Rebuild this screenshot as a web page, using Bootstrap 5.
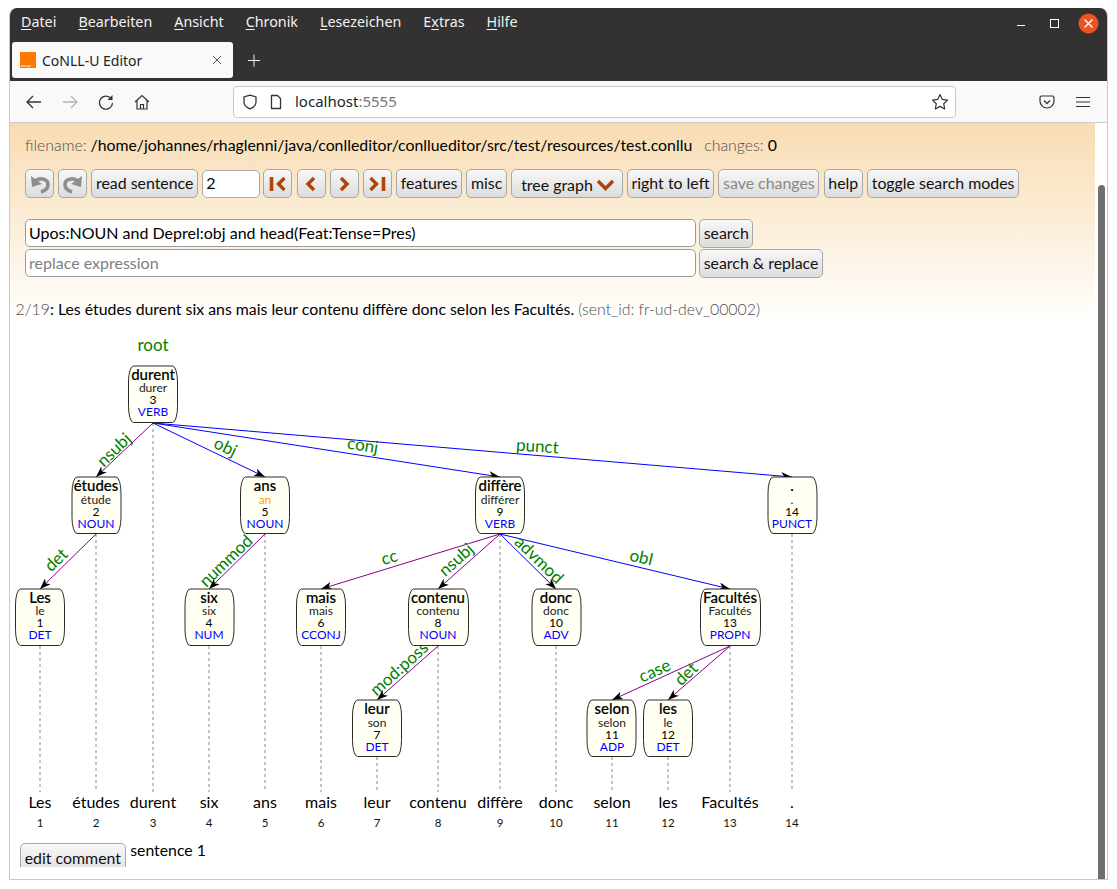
<!DOCTYPE html>
<html lang="de">
<head>
<meta charset="utf-8">
<title>CoNLL-U Editor</title>
<link href="https://cdn.jsdelivr.net/npm/bootstrap@5.3.0/dist/css/bootstrap.min.css" rel="stylesheet">
<style>
html,body{height:889px;overflow:hidden;background:#fff;margin:0}
.frame{margin:8px 9px 9px 9px;height:872px;border:1px solid #c9c9c9;border-top:0;border-radius:8px 8px 0 0;overflow:hidden;font-family:"Noto Sans",sans-serif}
.menu-bar{height:34px;background:#333132;color:#f2f2f2;font-size:14.300px;padding-left:11px;gap:22px}
.menu-txt{margin-bottom:6px}
.menu-bar u{text-underline-offset:2px}
.win-btns{margin-left:auto;height:34px}
.tab-bar{height:39px;background:#333132;padding-left:2px}
.tab-item{width:221px;height:36px;background:#f9f9fa;border-radius:3px;font-size:14px;color:#222;padding:0 11px 0 8px;gap:6px}
.fav{flex:none}
.tab-x{margin-left:auto;flex:none}
.plus{margin-left:14px}
.nav-bar{height:42px;background:#f9f9fa;border-bottom:1px solid #ccc;padding-left:15px}
.nav-ico{width:36px;flex:none}
.home-ico{width:18px;flex:none}
.url-bar{width:723px;height:32px;margin-left:82px;background:#fff;border:1px solid #c8c8c8;border-radius:4px;font-size:15px;padding:0 6px 0 8px;flex:none}
.url-bar .port{color:#777}
.g-doc{margin-left:10px}
.g-host{margin-left:11px}
.right-ico{margin-left:auto;padding-right:16px;gap:20px}
.main-row{height:757px}
.app-pane{width:1085px;position:relative;overflow:hidden;height:744px;font-family:Lato,sans-serif;font-size:15.840px;color:#000;background:linear-gradient(to bottom,#f8dcb2 0,#fff 200px,#fff 100%);flex:none}
.scroll-pane{width:12px;background:#fff;flex:none}
.scroll-thumb{width:7px;height:695px;margin-top:62px;margin-left:3px;background:#6f6f6f;border-radius:4px 4px 0 0}
.file-line{padding:12px 0 0 15px;height:42px;line-height:20px}
.lite{color:#4d4d4d;font-weight:300}
.tool-row{padding-left:15px;gap:4.150px;height:29px;margin-top:4px}
.tbtn{height:29px;padding:0 3.700px 2px;font-family:Lato,sans-serif;font-size:15.900px;line-height:25px;color:#111;background:linear-gradient(to bottom,#f8f8f8,#dcdcdc);border:1px solid #a8a8a8;border-radius:5px;white-space:nowrap;flex:none}
.tbtn.off{color:#888}
.ibtn{width:29px;padding:0;display:flex;align-items:center;justify-content:center}
.num-in{width:58px;height:28px;font-size:16px;padding:0 3px 2px;margin-right:-1px;border:1px solid #a8a8a8;border-radius:5px;background:#fff;font-family:Lato,sans-serif;flex:none}
.sel-btn{width:111.500px;padding:2px 2px 0 9px;display:flex;align-items:center;gap:3px}
.search-wrap{margin-top:21px;padding-left:15px}
.search-row{gap:3px;height:30px}
.txt-in{width:671px;height:28px;font-size:16px;padding:0 3px 2px;border:1px solid #9b9b9b;border-radius:5px;background:#fff;color:#000;font-family:Lato,sans-serif;flex:none}
.txt-in::placeholder{color:#808080}
.sent-line{margin-top:20px;padding-left:5.500px;line-height:20px}
.tree-svg{display:block;margin-top:11px}
.tree-svg text{font-family:Lato,sans-serif;text-anchor:middle}
.n-box{fill:#fffff3;stroke:#2a2a2a;stroke-width:1}
.t-form{font-size:15px;font-weight:500;fill:#000;stroke:#000;stroke-width:.15px}
.t-lem{font-size:12px;fill:#222}
.t-id{font-size:12px;fill:#000}
.t-pos{font-size:12px;fill:#00f}
.t-orange{font-size:12px;fill:orange}
.t-lab{font-size:17px;fill:green}
.t-word{font-size:16px;fill:#000}
.t-num{font-size:11.500px;fill:#111}
.e-p{stroke:#8b008b;stroke-width:1;fill:none;marker-end:url(#arr)}
.e-b{stroke:#00f;stroke-width:1;fill:none;marker-end:url(#arr)}
.e-d{stroke:#888;stroke-width:1;stroke-dasharray:3 3;fill:none}
.foot-row{position:absolute;left:10px;top:720px;gap:4.500px;line-height:20px}
.sent-note{margin-top:-3px}
.cmt-btn{height:30px;padding:0 3.700px;font-family:Lato,sans-serif;font-size:15.900px;background:linear-gradient(to bottom,#f8f8f8,#e0e0e0);border:1px solid #a8a8a8;border-radius:5px;color:#111;align-self:flex-start}
</style>
</head>
<body>
<div class="frame">
  <div class="menu-bar d-flex align-items-center">
    <span class="menu-txt"><u>D</u>atei</span><span class="menu-txt"><u>B</u>earbeiten</span><span class="menu-txt"><u>A</u>nsicht</span><span class="menu-txt"><u>C</u>hronik</span><span class="menu-txt"><u>L</u>esezeichen</span><span class="menu-txt">E<u>x</u>tras</span><span class="menu-txt"><u>H</u>ilfe</span>
    <svg class="win-btns" width="100" height="34" viewBox="0 0 100 34">
      <path d="M10 17.500h8" stroke="#fff" stroke-width="1" fill="none"/>
      <rect x="43.500" y="11.500" width="8" height="8" stroke="#fff" fill="none"/>
      <circle cx="81.500" cy="15.500" r="10" fill="#e95420"/>
      <path d="M77.500 11.500l8 8M85.500 11.500l-8 8" stroke="#fff" stroke-width="1.400"/>
    </svg>
  </div>
  <div class="tab-bar d-flex align-items-start">
    <div class="tab-item d-flex align-items-center">
      <svg class="fav" width="16" height="16" viewBox="0 0 16 16"><rect width="16" height="16" fill="#ff7900"/><text x="1" y="14.800" font-size="3.200" fill="#fff" font-family="Liberation Sans,sans-serif">orange</text></svg>
      <span>CoNLL-U Editor</span>
      <svg class="tab-x" width="10" height="10" viewBox="0 0 10 10"><path d="M1 1l8 8M9 1l-8 8" stroke="#555" stroke-width="1"/></svg>
    </div>
    <svg class="plus" width="14" height="36" viewBox="0 0 14 36"><path d="M1 18.500h12M7 12.500v12" stroke="#f2f2f2" stroke-width="1"/></svg>
  </div>
  <div class="nav-bar d-flex align-items-center">
    <span class="nav-ico d-flex"><svg width="18" height="16" viewBox="0 0 18 16"><path d="M2 8h14M8 2L2 8l6 6" stroke="#333" stroke-width="1.300" fill="none"/></svg></span>
    <span class="nav-ico d-flex"><svg width="18" height="16" viewBox="0 0 18 16"><path d="M2 8h14M10 2l6 6-6 6" stroke="#b5b5b5" stroke-width="1.300" fill="none"/></svg></span>
    <span class="nav-ico d-flex"><svg width="18" height="16" viewBox="0 0 18 16"><path d="M14 4.500A6.500 6.500 0 1 0 15.500 9" stroke="#333" stroke-width="1.300" fill="none"/><path d="M15.500 1v5h-5z" fill="#333"/></svg></span>
    <span class="home-ico d-flex"><svg width="18" height="16" viewBox="0 0 18 16"><path d="M2 8l7-6.500L16 8M4 6.500V15h10V6.500M7.500 15v-4.500h3V15" stroke="#333" stroke-width="1.200" fill="none"/></svg></span>
    <div class="url-bar d-flex align-items-center">
      <svg width="16" height="16" viewBox="0 0 16 16"><path d="M8 1.200L2 3v5c0 3.200 2.600 5.600 6 6.800 3.400-1.200 6-3.600 6-6.800V3z" stroke="#333" stroke-width="1.300" fill="none"/></svg>
      <svg class="g-doc" width="16" height="16" viewBox="0 0 16 16"><path d="M3.500 1.500h6l3 3v10h-9z" stroke="#333" stroke-width="1.300" fill="none" stroke-linejoin="round"/></svg>
      <span class="g-host">localhost<span class="port">:5555</span></span>
      <svg class="ms-auto" width="18" height="18" viewBox="0 0 18 18"><path d="M9 1.500l2.300 4.900 5.200.7-3.800 3.600 1 5.300L9 13.400l-4.700 2.600 1-5.300L1.500 7.100l5.200-.7z" stroke="#333" stroke-width="1.200" fill="none" stroke-linejoin="round"/></svg>
    </div>
    <div class="right-ico d-flex align-items-center">
      <svg width="16" height="16" viewBox="0 0 16 16"><path d="M2.500 2h11A1.500 1.500 0 0 1 15 3.500V7A7 7 0 0 1 1 7V3.500A1.500 1.500 0 0 1 2.500 2z" stroke="#333" stroke-width="1.200" fill="none"/><path d="M5 6.500l3 3 3-3" stroke="#333" stroke-width="1.300" fill="none"/></svg>
      <svg width="16" height="16" viewBox="0 0 16 16"><path d="M1 3.500h14M1 8h14M1 12.500h14" stroke="#333" stroke-width="1.200"/></svg>
    </div>
  </div>
  <div class="main-row d-flex">
    <div class="app-pane">
      <div class="file-line"><span class="lite">filename:</span> /home/johannes/rhaglenni/java/conlleditor/conllueditor/src/test/resources/test.conllu <span class="lite ms-2">changes:</span> 0</div>
      <div class="tool-row d-flex align-items-center">
        <button class="tbtn ibtn" type="button" aria-label="undo"><svg width="22" height="20" viewBox="0 0 22 20"><path d="M2 2l1 11 10-3z" fill="#8e8e8e"/><path d="M7 6.500C11 3.500 19 5 19 10.500 19 14.500 15.500 17 12 18" stroke="#8e8e8e" stroke-width="3.600" fill="none"/></svg></button>
        <button class="tbtn ibtn" type="button" aria-label="redo"><svg width="22" height="20" viewBox="0 0 22 20"><path d="M20 2l-1 11-10-3z" fill="#8e8e8e"/><path d="M15 6.500C11 3.500 3 5 3 10.500 3 14.500 6.500 17 10 18" stroke="#8e8e8e" stroke-width="3.600" fill="none"/></svg></button>
        <button class="tbtn" type="button">read sentence</button>
        <input class="num-in" value="2" aria-label="sentence">
        <button class="tbtn ibtn" type="button" aria-label="first"><svg width="20" height="16" viewBox="0 0 20 16"><path d="M3.500 1v14" stroke="#b0420a" stroke-width="3.600"/><path d="M16.500 2l-6 6 6 6" stroke="#b0420a" stroke-width="3.400" fill="none"/></svg></button>
        <button class="tbtn ibtn" type="button" aria-label="previous"><svg width="14" height="16" viewBox="0 0 14 16"><path d="M10 2L4 8l6 6" stroke="#b0420a" stroke-width="3.400" fill="none"/></svg></button>
        <button class="tbtn ibtn" type="button" aria-label="next"><svg width="14" height="16" viewBox="0 0 14 16"><path d="M4 2l6 6-6 6" stroke="#b0420a" stroke-width="3.400" fill="none"/></svg></button>
        <button class="tbtn ibtn" type="button" aria-label="last"><svg width="20" height="16" viewBox="0 0 20 16"><path d="M16.500 1v14" stroke="#b0420a" stroke-width="3.600"/><path d="M3.500 2l6 6-6 6" stroke="#b0420a" stroke-width="3.400" fill="none"/></svg></button>
        <button class="tbtn" type="button">features</button>
        <button class="tbtn" type="button">misc</button>
        <button class="tbtn sel-btn" type="button">tree graph<svg width="19" height="12" viewBox="0 0 19 12"><path d="M2 2l7.500 7.500L17 2" stroke="#b0420a" stroke-width="3.400" fill="none"/></svg></button>
        <button class="tbtn" type="button">right to left</button>
        <button class="tbtn off" type="button">save changes</button>
        <button class="tbtn" type="button">help</button>
        <button class="tbtn" type="button">toggle search modes</button>
      </div>
      <div class="search-wrap">
        <div class="search-row d-flex align-items-start"><input class="txt-in" value="Upos:NOUN and Deprel:obj and head(Feat:Tense=Pres)" aria-label="search"><button class="tbtn" type="button">search</button></div>
        <div class="search-row d-flex align-items-start"><input class="txt-in" placeholder="replace expression" aria-label="replace"><button class="tbtn" type="button">search &amp; replace</button></div>
      </div>
      <div class="sent-line"><span class="lite">2/19</span>: Les études durent six ans mais leur contenu diffère donc selon les Facultés. <span class="lite">(sent_id: fr-ud-dev_00002)</span></div>
      <svg class="tree-svg" width="850" height="505" viewBox="10 330 850 505" role="img" aria-label="tree graph">
        <defs><marker id="arr" markerUnits="userSpaceOnUse" markerWidth="12" markerHeight="8" refX="11" refY="4" orient="auto"><path d="M0 0L11 4L0 8L3 4z" fill="#000"/></marker></defs>
        <g>
          <path class="e-d" d="M40 646V792M96 534V792M153 423V792M209 646V792M265 534V792M321 646V792M377 757V792M438 646V792M500 534V792M556 646V792M612 757V792M668 757V792M730 646V792M792 534V792"/>
          <path class="e-p" d="M153 423L96 477"/><path class="e-b" d="M153 423L265 477"/><path class="e-b" d="M153 423L500 477"/><path class="e-b" d="M153 423L792 477"/>
          <path class="e-p" d="M96 534L40 589"/><path class="e-p" d="M265 534L209 589"/>
          <path class="e-p" d="M500 534L321 589"/><path class="e-p" d="M500 534L438 589"/><path class="e-b" d="M500 534L556 589"/><path class="e-b" d="M500 534L730 589"/>
          <path class="e-p" d="M438 646L377 700"/><path class="e-p" d="M730 646L612 700"/><path class="e-p" d="M730 646L668 700"/>
        </g>
        <g>
          <text class="t-lab" x="153" y="351">root</text>
          <text class="t-lab" transform="translate(118,454) rotate(-44)">nsubj</text>
          <text class="t-lab" transform="translate(223,452) rotate(26)">obj</text>
          <text class="t-lab" transform="translate(362,451) rotate(9)">conj</text>
          <text class="t-lab" transform="translate(537,452) rotate(4)">punct</text>
          <text class="t-lab" transform="translate(60,564) rotate(-44)">det</text>
          <text class="t-lab" transform="translate(230,565) rotate(-44)">nummod</text>
          <text class="t-lab" transform="translate(391,563) rotate(-17)">cc</text>
          <text class="t-lab" transform="translate(460,564) rotate(-42)">nsubj</text>
          <text class="t-lab" transform="translate(535,564) rotate(44)">advmod</text>
          <text class="t-lab" transform="translate(640,563) rotate(13)">obl</text>
          <text class="t-lab" transform="translate(403,673) rotate(-42)">mod:poss</text>
          <text class="t-lab" transform="translate(657,676) rotate(-24)">case</text>
          <text class="t-lab" transform="translate(690,678) rotate(-44)">det</text>
        </g>
        <g id="nodes">
          <g><rect class="n-box" x="128.500" y="366" width="49" height="56.500" rx="5" ry="16"/><text class="t-form" x="153" y="380">durent</text><text class="t-lem" x="153" y="392">durer</text><text class="t-id" x="153" y="404">3</text><text class="t-pos" x="153" y="416">VERB</text></g>
          <g><rect class="n-box" x="72" y="477" width="49" height="56.500" rx="5" ry="16"/><text class="t-form" x="96" y="491">études</text><text class="t-lem" x="96" y="504">étude</text><text class="t-id" x="96" y="516">2</text><text class="t-pos" x="96" y="528">NOUN</text></g>
          <g><rect class="n-box" x="240.500" y="477" width="49" height="56.500" rx="5" ry="16"/><text class="t-form" x="265" y="491">ans</text><text class="t-orange" x="265" y="504">an</text><text class="t-id" x="265" y="516">5</text><text class="t-pos" x="265" y="528">NOUN</text></g>
          <g><rect class="n-box" x="475.500" y="477" width="49" height="56.500" rx="5" ry="16"/><text class="t-form" x="500" y="491">diffère</text><text class="t-lem" x="500" y="504">différer</text><text class="t-id" x="500" y="516">9</text><text class="t-pos" x="500" y="528">VERB</text></g>
          <g><rect class="n-box" x="768" y="477" width="49" height="56.500" rx="5" ry="16"/><text class="t-form" x="792" y="491">.</text><text class="t-lem" x="792" y="504">.</text><text class="t-id" x="792" y="516">14</text><text class="t-pos" x="792" y="528">PUNCT</text></g>
          <g><rect class="n-box" x="15.500" y="589" width="49" height="56.500" rx="5" ry="16"/><text class="t-form" x="40" y="603">Les</text><text class="t-lem" x="40" y="615">le</text><text class="t-id" x="40" y="627">1</text><text class="t-pos" x="40" y="639">DET</text></g>
          <g><rect class="n-box" x="185" y="589" width="49" height="56.500" rx="5" ry="16"/><text class="t-form" x="209" y="603">six</text><text class="t-lem" x="209" y="615">six</text><text class="t-id" x="209" y="627">4</text><text class="t-pos" x="209" y="639">NUM</text></g>
          <g><rect class="n-box" x="296.500" y="589" width="49" height="56.500" rx="5" ry="16"/><text class="t-form" x="321" y="603">mais</text><text class="t-lem" x="321" y="615">mais</text><text class="t-id" x="321" y="627">6</text><text class="t-pos" x="321" y="639">CCONJ</text></g>
          <g><rect class="n-box" x="408.500" y="589" width="60" height="56.500" rx="5" ry="16"/><text class="t-form" x="438" y="603">contenu</text><text class="t-lem" x="438" y="615">contenu</text><text class="t-id" x="438" y="627">8</text><text class="t-pos" x="438" y="639">NOUN</text></g>
          <g><rect class="n-box" x="532" y="589" width="49" height="56.500" rx="5" ry="16"/><text class="t-form" x="556" y="603">donc</text><text class="t-lem" x="556" y="615">donc</text><text class="t-id" x="556" y="627">10</text><text class="t-pos" x="556" y="639">ADV</text></g>
          <g><rect class="n-box" x="700.500" y="589" width="60" height="56.500" rx="5" ry="16"/><text class="t-form" x="730" y="603">Facultés</text><text class="t-lem" x="730" y="615">Facultés</text><text class="t-id" x="730" y="627">13</text><text class="t-pos" x="730" y="639">PROPN</text></g>
          <g><rect class="n-box" x="352.500" y="700" width="49" height="56.500" rx="5" ry="16"/><text class="t-form" x="377" y="714">leur</text><text class="t-lem" x="377" y="727">son</text><text class="t-id" x="377" y="739">7</text><text class="t-pos" x="377" y="751">DET</text></g>
          <g><rect class="n-box" x="587" y="700" width="49" height="56.500" rx="5" ry="16"/><text class="t-form" x="612" y="714">selon</text><text class="t-lem" x="612" y="727">selon</text><text class="t-id" x="612" y="739">11</text><text class="t-pos" x="612" y="751">ADP</text></g>
          <g><rect class="n-box" x="643.500" y="700" width="49" height="56.500" rx="5" ry="16"/><text class="t-form" x="668" y="714">les</text><text class="t-lem" x="668" y="727">le</text><text class="t-id" x="668" y="739">12</text><text class="t-pos" x="668" y="751">DET</text></g>
        </g>
        <g>
          <text class="t-word" x="40" y="808">Les</text><text class="t-word" x="96" y="808">études</text><text class="t-word" x="153" y="808">durent</text><text class="t-word" x="209" y="808">six</text><text class="t-word" x="265" y="808">ans</text><text class="t-word" x="321" y="808">mais</text><text class="t-word" x="377" y="808">leur</text><text class="t-word" x="438" y="808">contenu</text><text class="t-word" x="500" y="808">diffère</text><text class="t-word" x="556" y="808">donc</text><text class="t-word" x="612" y="808">selon</text><text class="t-word" x="668" y="808">les</text><text class="t-word" x="730" y="808">Facultés</text><text class="t-word" x="792" y="808">.</text>
          <text class="t-num" x="40" y="827">1</text><text class="t-num" x="96" y="827">2</text><text class="t-num" x="153" y="827">3</text><text class="t-num" x="209" y="827">4</text><text class="t-num" x="265" y="827">5</text><text class="t-num" x="321" y="827">6</text><text class="t-num" x="377" y="827">7</text><text class="t-num" x="438" y="827">8</text><text class="t-num" x="500" y="827">9</text><text class="t-num" x="556" y="827">10</text><text class="t-num" x="612" y="827">11</text><text class="t-num" x="668" y="827">12</text><text class="t-num" x="730" y="827">13</text><text class="t-num" x="792" y="827">14</text>
        </g>
      </svg>
      <div class="foot-row d-flex"><button class="cmt-btn" type="button">edit comment</button><span class="sent-note">sentence 1</span></div>
    </div>
    <div class="scroll-pane"><div class="scroll-thumb"></div></div>
  </div>
</div>
<script src="https://cdn.jsdelivr.net/npm/bootstrap@5.3.0/dist/js/bootstrap.bundle.min.js"></script>
</body>
</html>
